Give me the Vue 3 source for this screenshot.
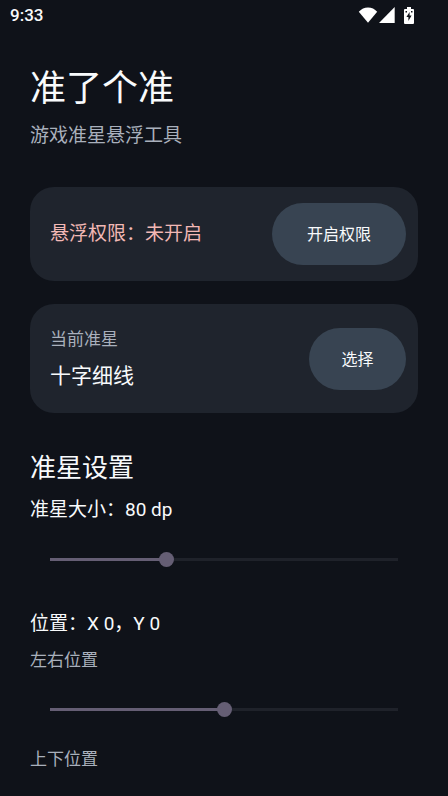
<script setup>
import { computed, ref } from 'vue'

const size = ref(80)
const offsetX = ref(0)
const offsetY = ref(0)

const fill = (value, min, max) => ({ '--fill': `${((value - min) / (max - min)) * 100}%` })
const sizeFill = computed(() => fill(size.value, 20, 200))
const xFill = computed(() => fill(offsetX.value, -500, 500))
</script>

<template>
  <div class="screen">
    <header class="status">
      <time class="clock">9:33</time>
      <div class="indicators">
        <svg width="20" height="16" viewBox="0 0 20 16" aria-hidden="true">
          <path d="M.8 4.8Q4.6 .4 10 .4T19.2 4.8L10 15.8Z" />
        </svg>
        <svg width="16" height="16" viewBox="0 0 16 16" aria-hidden="true">
          <path d="M15.7 0V16H0Z" />
        </svg>
        <svg class="battery" width="10" height="17" viewBox="0 0 10 17" aria-hidden="true">
          <path d="M3 0H7V2H9Q10 2 10 3V16Q10 17 9 17H1Q0 17 0 16V3Q0 2 1 2H3Z" />
          <path class="cut" d="M5.6 5L2.4 10H4.4V14L7.6 8.6H5.6ZM1.5 4H3V5.5H1.5ZM7 4H8.5V5.5H7Z" />
        </svg>
      </div>
    </header>

    <main class="content">
      <h1 class="title">准了个准</h1>
      <p class="subtitle">游戏准星悬浮工具</p>

      <section class="card permission">
        <p class="warning">悬浮权限：未开启</p>
        <button class="pill" type="button">开启权限</button>
      </section>

      <section class="card current">
        <div>
          <p class="caption">当前准星</p>
          <p class="name">十字细线</p>
        </div>
        <button class="pill" type="button">选择</button>
      </section>

      <h2 class="heading">准星设置</h2>
      <label class="label" for="size">准星大小：{{ size }} dp</label>
      <input id="size" v-model.number="size" class="slider" type="range" min="20" max="200" :style="sizeFill" />

      <p class="label position">位置：X {{ offsetX }}，Y {{ offsetY }}</p>
      <label class="caption axis" for="offset-x">左右位置</label>
      <input id="offset-x" v-model.number="offsetX" class="slider" type="range" min="-500" max="500" :style="xFill" />
      <p class="caption axis-next">上下位置</p>
    </main>
  </div>
</template>

<style>
body {
  margin: 0;
  background: #0f1219;
}
</style>

<style scoped>
h1,
h2,
p {
  margin: 0;
}

.screen {
  min-height: 100vh;
  box-sizing: border-box;
  color: #f8fafc;
  background: #0f1219;
  font-family: Roboto, "Noto Sans CJK SC", sans-serif;
}

.status {
  display: flex;
  align-items: center;
  justify-content: space-between;
  box-sizing: border-box;
  height: 32px;
  padding: 0 34px 2px 10px;
}

.clock {
  font-size: 17px;
  font-weight: 500;
}

.indicators {
  display: flex;
  align-items: center;
  gap: 1px;
  fill: #fff;
}

.battery {
  margin-left: 8px;
}

.cut {
  fill: #0f1219;
}

.content {
  display: flex;
  flex-direction: column;
  padding: 33px 30px 0;
}

.title {
  font-size: 36px;
  font-weight: 400;
  line-height: 48px;
}

.subtitle {
  margin-top: 9px;
  color: #a9b0bc;
  font-size: 19px;
  line-height: 28px;
}

.card {
  display: flex;
  align-items: center;
  justify-content: space-between;
  box-sizing: border-box;
  padding: 16px 12px 16px 20px;
  border-radius: 24px;
  background: #1f242d;
}

.permission {
  min-height: 94px;
  margin-top: 37px;
}

.current {
  min-height: 109px;
  margin-top: 23px;
}

.warning {
  color: #f2b8b5;
  font-size: 19px;
  line-height: 28px;
}

.pill {
  min-width: 97px;
  height: 62px;
  padding: 0 35px 2px;
  border: 0;
  border-radius: 31px;
  color: #f8fafc;
  background: #384452;
  font: inherit;
  font-size: 16px;
  white-space: nowrap;
}

.current .pill {
  padding: 0 24px 2px;
}

.caption {
  color: #a9b0bc;
  font-size: 17px;
  line-height: 28px;
}

.name {
  margin-top: 7px;
  font-size: 21px;
  line-height: 32px;
}

.heading {
  margin-top: 37px;
  font-size: 26px;
  font-weight: 400;
  line-height: 36px;
}

.label {
  margin-top: 10px;
  font-size: 19px;
  line-height: 28px;
}

.slider {
  appearance: none;
  height: 47px;
  margin: 12px 13px;
  background: linear-gradient(to right, #655e74 var(--fill), #1f222a var(--fill)) center / calc(100% - 14px) 3px no-repeat;
}

.slider::-webkit-slider-thumb {
  appearance: none;
  width: 15px;
  height: 15px;
  border-radius: 50%;
  background: #655e74;
}

.position {
  margin-top: 15px;
}

.axis {
  margin-top: 8px;
}
</style>
